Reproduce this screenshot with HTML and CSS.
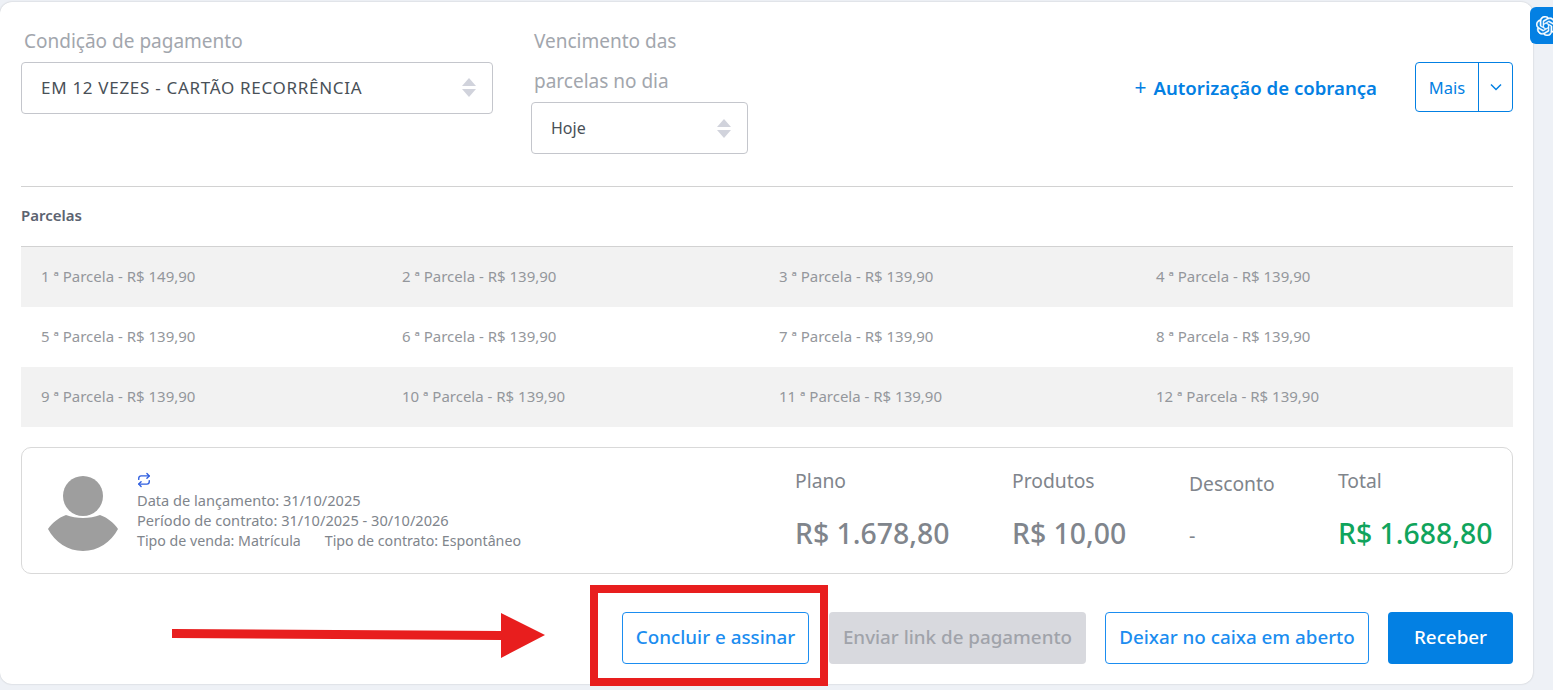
FILE: index.html
```html
<!DOCTYPE html>
<html lang="pt-BR">
<head>
    <meta charset="UTF-8">
    <meta name="viewport" content="width=device-width, initial-scale=1.0">
    <title>Condição de pagamento</title>
    <link rel="stylesheet" href="styles.css">
</head>
<body>
    <div class="card">
        <div class="top">
            <div class="field field-condicao">
                <div class="field-label">Condição de pagamento</div>
                <div class="select select-caps">
                    <span>EM 12 VEZES - CARTÃO RECORRÊNCIA</span>
                    <span class="select-arrows"><i class="up"></i><i class="down"></i></span>
                </div>
            </div>
            <div class="field field-vencimento">
                <div class="field-label">Vencimento das<br>parcelas no dia</div>
                <div class="select">
                    <span>Hoje</span>
                    <span class="select-arrows"><i class="up"></i><i class="down"></i></span>
                </div>
            </div>
            <div class="top-actions">
                <a class="auth-link"><span class="plus">+</span>Autorização de cobrança</a>
                <div class="more">
                    <span class="more-label">Mais</span>
                    <span class="more-caret">
                        <svg width="14" height="14" viewBox="0 0 14 14" fill="none" stroke="#0380e3" stroke-width="1.5"><path d="M2 4.5l5 5 5-5"/></svg>
                    </span>
                </div>
            </div>
        </div>

        <div class="section-title">Parcelas</div>
        <div class="parcelas">
            <div class="parcela">1 ª Parcela - R$ 149,90</div>
            <div class="parcela">2 ª Parcela - R$ 139,90</div>
            <div class="parcela">3 ª Parcela - R$ 139,90</div>
            <div class="parcela">4 ª Parcela - R$ 139,90</div>
            <div class="parcela">5 ª Parcela - R$ 139,90</div>
            <div class="parcela">6 ª Parcela - R$ 139,90</div>
            <div class="parcela">7 ª Parcela - R$ 139,90</div>
            <div class="parcela">8 ª Parcela - R$ 139,90</div>
            <div class="parcela">9 ª Parcela - R$ 139,90</div>
            <div class="parcela">10 ª Parcela - R$ 139,90</div>
            <div class="parcela">11 ª Parcela - R$ 139,90</div>
            <div class="parcela">12 ª Parcela - R$ 139,90</div>
        </div>

        <div class="resumo">
            <svg class="avatar" width="72" height="76" viewBox="0 0 72 76">
                <circle cx="36" cy="20" r="20" fill="#9e9e9e"/>
                <path d="M19 39c10 4 24 4 34 0 8 3 14 8 18 14-7 13-20 22-35 22S8 66 1 53c4-6 10-11 18-14z" fill="#9e9e9e"/>
            </svg>
            <div class="resumo-info">
                <svg class="repeat" width="14" height="14" viewBox="0 0 24 24" fill="none" stroke="#2f5fe0" stroke-width="2.4" stroke-linecap="round" stroke-linejoin="round">
                    <path d="M17 1l4 4-4 4"/><path d="M3 11V9a4 4 0 0 1 4-4h14"/><path d="M7 23l-4-4 4-4"/><path d="M21 13v2a4 4 0 0 1-4 4H3"/>
                </svg>
                <div>Data de lançamento: 31/10/2025</div>
                <div>Período de contrato: 31/10/2025 - 30/10/2026</div>
                <div class="info-row"><span>Tipo de venda: Matrícula</span><span>Tipo de contrato: Espontâneo</span></div>
            </div>
            <div class="valor valor-plano">
                <div class="valor-label">Plano</div>
                <div class="valor-num">R$ 1.678,80</div>
            </div>
            <div class="valor valor-produtos">
                <div class="valor-label">Produtos</div>
                <div class="valor-num">R$ 10,00</div>
            </div>
            <div class="valor valor-desconto">
                <div class="valor-label">Desconto</div>
                <div class="valor-traco">-</div>
            </div>
            <div class="valor valor-total">
                <div class="valor-label">Total</div>
                <div class="valor-num verde">R$ 1.688,80</div>
            </div>
        </div>

        <div class="acoes">
            <button class="btn btn-outline btn-concluir">Concluir e assinar</button>
            <button class="btn btn-disabled">Enviar link de pagamento</button>
            <button class="btn btn-outline btn-deixar">Deixar no caixa em aberto</button>
            <button class="btn btn-primary">Receber</button>
        </div>
    </div>

    <div class="gpt-tab">
        <svg width="20" height="20" viewBox="0 0 24 24" fill="#fff" stroke="#fff" stroke-width="0.5"><path d="M22.2819 9.8211a5.9847 5.9847 0 0 0-.5157-4.9108 6.0462 6.0462 0 0 0-6.5098-2.9A6.0651 6.0651 0 0 0 4.9807 4.1818a5.9847 5.9847 0 0 0-3.9977 2.9 6.0462 6.0462 0 0 0 .7427 7.0966 5.98 5.98 0 0 0 .511 4.9107 6.051 6.051 0 0 0 6.5146 2.9001A5.9847 5.9847 0 0 0 13.2599 24a6.0557 6.0557 0 0 0 5.7718-4.2058 5.9894 5.9894 0 0 0 3.9977-2.9001 6.0557 6.0557 0 0 0-.7475-7.0729zm-9.022 12.6081a4.4755 4.4755 0 0 1-2.8764-1.0408l.1419-.0804 4.7783-2.7582a.7948.7948 0 0 0 .3927-.6813v-6.7369l2.02 1.1686a.071.071 0 0 1 .038.052v5.5826a4.504 4.504 0 0 1-4.4945 4.4944zm-9.6607-4.1254a4.4708 4.4708 0 0 1-.5346-3.0137l.142.0852 4.783 2.7582a.7712.7712 0 0 0 .7806 0l5.8428-3.3685v2.3324a.0804.0804 0 0 1-.0332.0615L9.74 19.9502a4.4992 4.4992 0 0 1-6.1408-1.6464zM2.3408 7.8956a4.485 4.485 0 0 1 2.3655-1.9728V11.6a.7664.7664 0 0 0 .3879.6765l5.8144 3.3543-2.0201 1.1685a.0757.0757 0 0 1-.071 0l-4.8303-2.7865A4.504 4.504 0 0 1 2.3408 7.872zm16.5963 3.8558L13.1038 8.364 15.1192 7.2a.0757.0757 0 0 1 .071 0l4.8303 2.7913a4.4944 4.4944 0 0 1-.6765 8.1042v-5.6772a.79.79 0 0 0-.407-.667zm2.0107-3.0231l-.142-.0852-4.7735-2.7818a.7759.7759 0 0 0-.7854 0L9.409 9.2297V6.8974a.0662.0662 0 0 1 .0284-.0615l4.8303-2.7866a4.4992 4.4992 0 0 1 6.6802 4.66zM8.3065 12.863l-2.02-1.1638a.0804.0804 0 0 1-.038-.0567V6.0742a4.4992 4.4992 0 0 1 7.3757-3.4537l-.142.0805L8.704 5.459a.7948.7948 0 0 0-.3927.6813zm1.0976-2.3654l2.602-1.4998 2.6069 1.4998v2.9994l-2.5974 1.4997-2.6067-1.4997Z"/></svg>
    </div>

    <!-- marcacoes vermelhas por cima da tela -->
    <div class="red-box"></div>
    <svg class="red-arrow" width="374" height="46" viewBox="0 0 374 46">
        <polygon points="0,16 329,18 329,0 373,22 329,45 329,27 0,25" fill="#e81e1e"/>
    </svg>
</body>
</html>
```

FILE: styles.css
```css
html, body {
    margin: 0;
    height: 100%;
}

body {
    font-family: "Noto Sans", "Open Sans", sans-serif;
    background: #eef1f6;
    overflow: hidden;
    position: relative;
}

* {
    box-sizing: border-box;
}

.card {
    background: #ffffff;
    width: 1533px;
    height: 682px;
    margin-top: 2px;
    padding: 0 20px 0 21px;
    border-radius: 12px;
    box-shadow: 0 0 2px rgba(0, 0, 0, 0.2);
}

.top {
    display: flex;
    height: 185px;
    padding-top: 19px;
    border-bottom: 1px solid #d2d2d2;
}

.field-label {
    font-size: 19px;
    line-height: 40px;
    color: #a2a6ad;
    padding-left: 3px;
    white-space: nowrap;
}

.field-condicao {
    width: 472px;
    margin-right: 38px;
}

.field-vencimento {
    width: 217px;
}

.select {
    display: flex;
    justify-content: space-between;
    align-items: center;
    height: 52px;
    margin-top: 1px;
    padding: 0 16px 0 19px;
    border: 1px solid #c4c6cc;
    border-radius: 4px;
    font-size: 16px;
    color: #495057;
}

.select-caps {
    font-size: 17px;
    letter-spacing: 0.7px;
    padding-bottom: 2px;
}

.select-arrows {
    display: flex;
    flex-direction: column;
    gap: 3px;
}

.select-arrows i {
    display: block;
    width: 0;
    height: 0;
    border-left: 7px solid transparent;
    border-right: 7px solid transparent;
}

.select-arrows .up {
    border-bottom: 8px solid #d1d3dc;
}

.select-arrows .down {
    border-top: 8px solid #d1d3dc;
}

.top-actions {
    display: flex;
    align-items: flex-start;
    margin-left: auto;
    padding-top: 41px;
}

.auth-link {
    color: #0380e3;
    font-size: 18.6px;
    font-weight: 600;
    line-height: 50px;
    margin-right: 38px;
}

.auth-link .plus {
    font-weight: 400;
    font-size: 21px;
    margin-right: 7px;
}

.more {
    display: flex;
    width: 98px;
    height: 50px;
    border: 1px solid #0380e3;
    border-radius: 4px;
    color: #0380e3;
    font-size: 16.5px;
}

.more-label {
    width: 63px;
    line-height: 50px;
    text-align: center;
    border-right: 1px solid #0380e3;
}

.more-caret {
    flex: 1;
    display: flex;
    align-items: center;
    justify-content: center;
}

.section-title {
    height: 60px;
    line-height: 56px;
    font-size: 15px;
    font-weight: 600;
    color: #5c6370;
    border-bottom: 1px solid #d2d2d2;
}

.parcelas {
    display: grid;
    grid-template-columns: 361px 377px 377px 1fr;
    grid-auto-rows: 60px;
}

.parcela {
    padding-left: 20px;
    line-height: 58px;
    font-size: 15px;
    color: #94979c;
}

.parcela:nth-child(-n+4),
.parcela:nth-child(n+9) {
    background: #f2f2f2;
}

.resumo {
    display: flex;
    position: relative;
    height: 127px;
    margin-top: 20px;
    border: 1px solid #d9d9d9;
    border-radius: 10px;
}

.avatar {
    margin: 28px 0 0 25px;
}

.resumo-info {
    margin: 24px 0 0 18px;
    font-size: 14.6px;
    line-height: 20px;
    color: #80858c;
}

.repeat {
    display: block;
    margin-bottom: 2px;
    height: 16px;
}

.info-row {
    display: flex;
    gap: 24px;
    font-size: 14.2px;
    padding-top: 1px;
}

.valor {
    position: absolute;
    top: 18px;
}

.valor-plano { left: 773px; }
.valor-produtos { left: 990px; }
.valor-desconto { left: 1167px; top: 21px; }
.valor-total { left: 1316px; }

.valor-label {
    font-size: 19.3px;
    line-height: 30px;
    color: #80858c;
}

.valor-num {
    margin-top: 19px;
    font-size: 28.4px;
    line-height: 36px;
    font-weight: 500;
    color: #80858c;
    white-space: nowrap;
}

.valor-num.verde {
    color: #10a45c;
}

.valor-traco {
    margin-top: 19px;
    line-height: 36px;
    font-size: 20px;
    color: #80858c;
}

.acoes {
    display: flex;
    justify-content: flex-end;
    gap: 19px;
    margin-top: 38px;
}

.btn {
    height: 52px;
    border-radius: 4px;
    font-family: inherit;
    font-size: 18.8px;
    font-weight: 500;
    padding: 0 0 3px;
    white-space: nowrap;
}

.btn-outline {
    background: #ffffff;
    border: 1px solid #1b8df0;
    color: #1b8df0;
}

.btn-concluir { width: 187px; margin-right: 1px; }
.btn-deixar { width: 264px; }

.btn-disabled {
    width: 257px;
    background: #d8d9de;
    border: none;
    color: #a0a3aa;
}

.btn-primary {
    width: 125px;
    background: #0380e3;
    border: none;
    color: #ffffff;
}

.gpt-tab {
    position: absolute;
    top: 7px;
    left: 1530px;
    width: 40px;
    height: 37px;
    padding: 9px 0 0 6px;
    background: #0380e3;
    border-radius: 6px 0 0 6px;
}

.red-box {
    position: absolute;
    left: 590px;
    top: 585px;
    width: 238px;
    height: 101px;
    border: 8px solid #e81e1e;
}

.red-arrow {
    position: absolute;
    left: 172px;
    top: 613px;
}
```
